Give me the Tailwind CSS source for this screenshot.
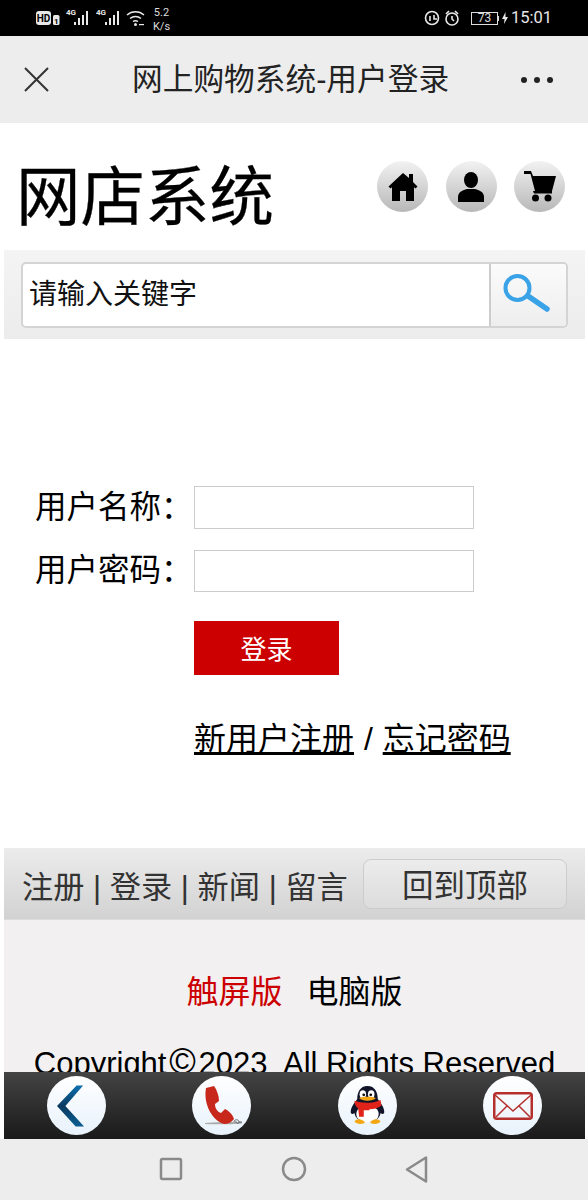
<!DOCTYPE html>
<html lang="zh-CN">
<head>
<meta charset="utf-8">
<script src="https://cdn.jsdelivr.net/npm/@tailwindcss/browser@4"></script>
</head>
<body class="m-0 bg-white">
<div class="relative w-[588px] h-[1200px] overflow-hidden bg-white text-black font-['Liberation_Sans','Noto_Sans_CJK_SC',sans-serif]">

  <!-- status bar -->
  <div class="h-9 bg-black flex items-center justify-between pl-9 pr-[36px] text-white font-['Roboto',sans-serif]">
    <div class="flex items-center">
      <svg width="136" height="30" viewBox="0 0 136 30" fill="#e8e8e8" font-family="Roboto, sans-serif">
        <rect x="0" y="8" width="15" height="14" rx="3"/>
        <text x="7.500" y="19" font-size="10" font-weight="700" text-anchor="middle" fill="#000">HD</text>
        <rect x="17" y="12" width="6.500" height="10" rx="1.500"/>
        <text x="20.200" y="20.500" font-size="8" font-weight="700" text-anchor="middle" fill="#000">1</text>
        <text x="30" y="12" font-size="8" font-weight="700">4G</text>
        <rect x="38" y="19" width="2" height="3"/><rect x="42" y="15" width="2" height="7"/><rect x="46" y="12" width="2" height="10"/><rect x="50" y="8" width="2" height="14"/>
        <text x="60" y="12" font-size="8" font-weight="700">4G</text>
        <rect x="69" y="19" width="2" height="3"/><rect x="73" y="15" width="2" height="7"/><rect x="77" y="12" width="2" height="10"/><rect x="81" y="8" width="2" height="14"/>
        <g fill="none" stroke="#e8e8e8" stroke-width="1.500"><path d="M91 12a13 13 0 0 1 17 0"/><path d="M94 15.500a9 9 0 0 1 11 0"/><path d="M97 18.500a4.500 4.500 0 0 1 5 0"/></g>
        <circle cx="99.500" cy="21.500" r="1.500"/><rect x="103" y="21" width="5" height="1.200"/>
        <text x="125.500" y="13" font-size="11" text-anchor="middle" fill="#ddd">5.2</text>
        <text x="125.500" y="27" font-size="11" text-anchor="middle" fill="#ddd">K/s</text>
      </svg>
    </div>
    <div class="flex items-center">
      <svg width="42" height="20" viewBox="0 0 42 20" fill="none" stroke="#e8e8e8" stroke-width="1.600" class="mr-[6px]">
        <circle cx="9" cy="10" r="6.500"/><path d="M7 8v5M11 7v4h3"/>
        <circle cx="29" cy="11" r="6"/><path d="M29 8v3l2 2M23 6l3-3M35 6l-3-3"/>
      </svg>
      <div class="w-[27px] h-[13px] border border-[#ddd] text-[12px] leading-[11px] text-center text-[#ddd]">73</div>
      <div class="w-[1px] h-[5px] bg-[#ddd] mr-[3px]"></div>
      <svg width="6" height="12" viewBox="0 0 6 12" fill="#e8e8e8" class="mr-[3px]"><path d="M3.500 0L0 7h2.500L2 12l4-7H3.500z"/></svg>
      <span class="text-[16.500px] leading-none text-[#e8e8e8]">15:01</span>
    </div>
  </div>

  <!-- wechat header -->
  <div class="h-[87px] bg-[#ededed] flex items-center pl-[24px] pr-[35px] text-[#222]">
    <svg width="25" height="25" viewBox="0 0 25 25" fill="none" stroke="#333" stroke-width="2"><path d="M1 1l23 23M24 1L1 24"/></svg>
    <div class="text-[30.700px] leading-none mt-[2px] ml-[83px]">网上购物系统-用户登录</div>
    <div class="flex gap-[7px] ml-auto">
      <span class="w-[6px] h-[6px] rounded-full bg-[#222]"></span>
      <span class="w-[6px] h-[6px] rounded-full bg-[#222]"></span>
      <span class="w-[6px] h-[6px] rounded-full bg-[#222]"></span>
    </div>
  </div>

  <!-- page content -->
  <div class="mx-1 w-[581px]">
    <div class="h-[127px] flex items-center justify-between pl-[14px] pr-[20px]">
      <div class="text-[64.500px] leading-none text-black -mb-[23px] [-webkit-text-stroke:0.3px_#000] -ml-[2px]">网店系统</div>
      <div class="flex gap-[17.500px]">
        <div class="w-[51px] h-[51px] rounded-full bg-gradient-to-b from-[#f2f2f2] to-[#b8b8b8] flex items-center justify-center">
          <svg width="30" height="30" viewBox="0 0 30 30" fill="#000"><path d="M15 1L0.500 14.500 2.500 16.500 4 15.200V29h8V19h6v10h8V15.200l1.500 1.300 2-2L25 10V2h-4v4z"/></svg>
        </div>
        <div class="w-[51px] h-[51px] rounded-full bg-gradient-to-b from-[#f2f2f2] to-[#b8b8b8] flex items-center justify-center">
          <svg width="26" height="30" viewBox="0 0 26 30" fill="#000"><ellipse cx="13" cy="8" rx="7" ry="8"/><path d="M0 30v-5c0-5 5-7 9-8h8c4 1 9 3 9 8v5z"/></svg>
        </div>
        <div class="w-[51px] h-[51px] rounded-full bg-gradient-to-b from-[#f2f2f2] to-[#b8b8b8] flex items-center justify-center">
          <svg width="32" height="32" viewBox="0 0 32 32" fill="#000"><path d="M0 0h7l2 5h23l-4 15H11L6.500 3H0z"/><path d="M9 20h19v2.500H10z"/><circle cx="11.500" cy="27" r="3.500"/><circle cx="24" cy="27" r="3.500"/></svg>
        </div>
      </div>
    </div>

    <!-- search -->
    <div class="h-[89px] bg-gradient-to-b from-[#f4f4f4] to-[#ececec] pl-[17px] pr-[17px] pt-[12px]">
      <div class="h-[66px] border-2 border-[#d4d4d4] rounded-[5px] bg-white flex overflow-hidden">
        <div class="flex-1 flex items-center pl-[6px] text-[28px] leading-none text-[#111]">请输入关键字</div>
        <div class="w-[77px] border-l-2 border-[#ccc] bg-gradient-to-b from-[#fbfbfb] to-[#eeeeee] flex items-center pl-[11px]">
          <svg width="50" height="40" viewBox="0 0 50 40" fill="none" stroke="#3aa2e6" class="-mt-[6px]"><circle cx="15.500" cy="16" r="12" stroke-width="4"/><path d="M26 24l19 13" stroke-width="5.500" stroke-linecap="round"/></svg>
        </div>
      </div>
    </div>

    <!-- login form -->
    <div class="h-[509px] pt-[147px] pl-[31px]">
      <div class="flex items-center h-[43px]">
        <div class="w-[159px] text-[31.500px] leading-none">用户名称：</div>
        <div class="w-[280px] h-[43px] border border-[#ccc] bg-white"></div>
      </div>
      <div class="flex items-center h-[42px] mt-[21px]">
        <div class="w-[159px] text-[31.500px] leading-none">用户密码：</div>
        <div class="w-[280px] h-[42px] border border-[#ccc] bg-white"></div>
      </div>
      <div class="ml-[159px] mt-[29px] w-[145px] h-[54px] bg-[#cc0000] text-white text-[26px] flex items-center justify-center leading-none pt-[4px]">登录</div>
      <div class="ml-[159px] mt-[48px] text-[32px] leading-none whitespace-nowrap"><span class="underline">新用户注册</span> <span class="px-[1px]">/</span> <span class="underline">忘记密码</span></div>
    </div>

    <!-- footer bar -->
    <div class="h-[72px] bg-gradient-to-b from-[#ececec] to-[#d2d2d2] border-b border-[#dcdcdc] flex items-center justify-between pl-[18px] pr-[18px] text-[#333]">
      <div class="text-[31.200px] leading-none whitespace-nowrap pt-[8px]">注册 | 登录 | 新闻 | 留言</div>
      <div class="w-[204px] h-[50px] rounded-[8px] border border-[#ccc] bg-gradient-to-b from-[#ececec] to-[#dcdcdc] flex items-center justify-center text-[31.500px] leading-none pt-[6px]">回到顶部</div>
    </div>

    <div class="h-[300px] bg-[#f2f0f1] text-center">
      <div class="pt-[56px] text-[32px] leading-none"><span class="text-[#cc0000] mr-[24px]">触屏版</span><span>电脑版</span></div>
      <div class="mt-[40px] text-[31px] leading-none whitespace-nowrap">Copyright<span class="inline-block w-[32px] text-center text-[36px] leading-[0]">©</span>2023&nbsp; All Rights Reserved</div>
    </div>
  </div>

  <!-- floating tab bar -->
  <div class="absolute left-1 top-[1072px] w-[581px] h-[67px] bg-gradient-to-b from-[#444] to-[#1a1a1a] flex">
    <div class="w-[145px] flex items-center justify-center pr-[1px]">
      <div class="w-[59px] h-[59px] rounded-full bg-gradient-to-b from-white to-[#e8f2fb] flex items-center justify-center">
        <svg width="28" height="42" viewBox="0 0 30 44" class="mr-[11px]"><defs><linearGradient id="a" x1="0" y1="0" x2="0" y2="1"><stop offset="0" stop-color="#0b70b0"/><stop offset=".5" stop-color="#0b3a60"/><stop offset="1" stop-color="#0a5d92"/></linearGradient></defs><path d="M28 0h-7L0 22l20 22h9L9 22z" fill="url(#a)"/></svg>
      </div>
    </div>
    <div class="w-[145px] flex items-center justify-center">
      <div class="w-[59px] h-[59px] rounded-full bg-gradient-to-b from-white to-[#e8f2fb] flex items-center justify-center">
        <svg width="46" height="46" viewBox="0 0 46 46"><path d="M6 40c8-1 28-1 37-1v1.500c-12 1-26 1-37 .5z" fill="#aaa"/><path d="M7 5L15 3C18 7 20 13 20 18L16 21C16 26 19 29 22 30L26 26C30 28 34 32 35 36C33 39 29 41 25 41C14 38 4 22 7 5z" fill="#c8281c"/><path d="M35 39c0-3 5-3 5 0s-4 1-3-1M40 39l3 0" stroke="#666" fill="none"/></svg>
      </div>
    </div>
    <div class="w-[146px] flex items-center justify-center">
      <div class="w-[59px] h-[59px] rounded-full bg-gradient-to-b from-white to-[#e8f2fb] flex items-center justify-center">
        <svg width="37" height="41" viewBox="0 0 38 44"><path d="M19 1c8 0 11 7 11 14 3 4 7 9 7 14 0 2-2 3-4 1-1 7-7 9-14 9s-13-2-14-9c-2 2-4 1-4-1 0-5 4-10 7-14C8 8 11 1 19 1z" fill="#111428"/><ellipse cx="19" cy="31" rx="12" ry="9" fill="#fff"/><ellipse cx="14" cy="10" rx="3.500" ry="4.500" fill="#fff"/><ellipse cx="23" cy="10" rx="3.500" ry="4.500" fill="#fff"/><circle cx="15" cy="10.500" r="1.500" fill="#111"/><circle cx="22.500" cy="10.500" r="1.500" fill="#111"/><path d="M5 17c8 3 20 3 28-1l1 6c-4 3-8 4-13 4l0 1h-6v7h-5l-1-9c-2-1-4-4-4-8z" fill="#e2231a"/><path d="M10 14c4-2 14-2 18 0-3 4-15 4-18 0z" fill="#f3a712"/><path d="M5 39c2-3 8-3 11 1 0 2-9 3-11-1zM22 40c3-4 9-4 11-1-2 4-11 3-11 1z" fill="#f3a712"/></svg>
      </div>
    </div>
    <div class="w-[145px] flex items-center justify-center">
      <div class="w-[59px] h-[59px] rounded-full bg-gradient-to-b from-white to-[#e8f2fb] flex items-center justify-center">
        <svg width="40" height="28" viewBox="0 0 40 28" fill="none" stroke="#b5302c"><rect x="1.250" y="1.250" width="37.500" height="25.500" rx="2.500" stroke-width="2.500"/><path d="M2 3l18 16L38 3M3 25l11-11M37 25L26 14" stroke-width="1.500"/></svg>
      </div>
    </div>
  </div>

  <!-- android nav -->
  <div class="absolute left-0 top-[1139px] w-[588px] h-[61px] bg-[#ededed]">
    <svg width="588" height="61" viewBox="0 0 588 61" fill="none" stroke="#8a8a8a" stroke-width="2.500">
      <rect x="161" y="20" width="20" height="20" rx="1.500"/>
      <circle cx="294" cy="30" r="11"/>
      <path d="M426 18.500v24l-19-12z" stroke-linejoin="round"/>
    </svg>
  </div>
</div>
</body>
</html>
